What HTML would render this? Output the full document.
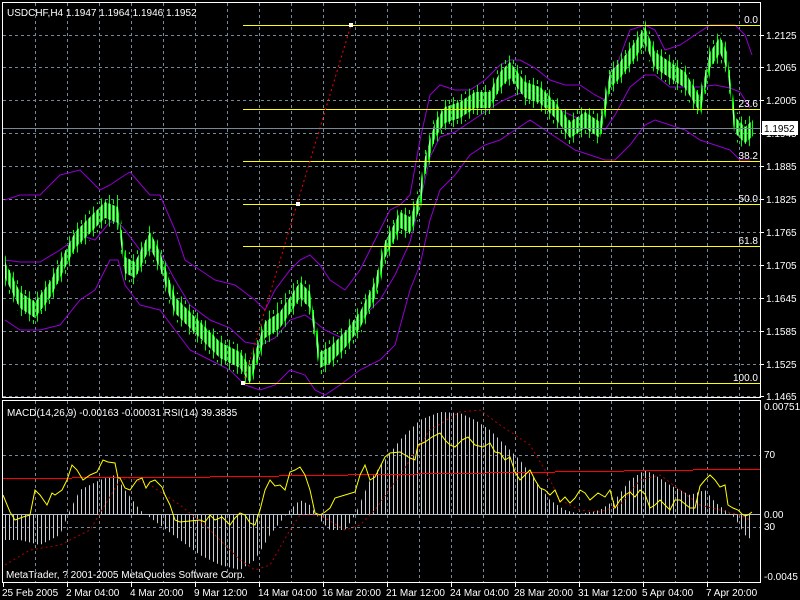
<!DOCTYPE html>
<html><head><meta charset="utf-8"><style>
html,body{margin:0;padding:0;background:#000;width:800px;height:600px;overflow:hidden}
svg{display:block}
text{font-family:"Liberation Sans",sans-serif;font-size:10px;fill:#fff}
</style></head><body>
<svg width="800" height="600" xmlns="http://www.w3.org/2000/svg">
<defs>
<pattern id="cd" x="4" y="0" width="4" height="10" patternUnits="userSpaceOnUse">
<rect x="0" y="0" width="3" height="10" fill="#00ff00"/><rect x="1" y="0" width="1" height="10" fill="#b0ffb0"/>
</pattern>
<pattern id="wk" x="4" y="0" width="8" height="10" patternUnits="userSpaceOnUse">
<rect x="1" y="0" width="1" height="10" fill="#00ff00"/><rect x="5" y="0" width="1" height="4" fill="#00ff00"/>
</pattern>
<pattern id="hs" x="5" y="0" width="4" height="10" patternUnits="userSpaceOnUse">
<rect x="0" y="0" width="1" height="10" fill="#c8ccd4"/>
</pattern>
</defs>
<rect width="800" height="600" fill="#000"/>
<!-- grid -->
<path stroke="#778899" stroke-dasharray="3,3" fill="none" d="M35.5 3V397M67.5 3V397M99.5 3V397M131.5 3V397M163.5 3V397M195.5 3V397M227.5 3V397M259.5 3V397M291.5 3V397M323.5 3V397M355.5 3V397M387.5 3V397M419.5 3V397M451.5 3V397M483.5 3V397M515.5 3V397M547.5 3V397M579.5 3V397M611.5 3V397M643.5 3V397M675.5 3V397M707.5 3V397M739.5 3V397
M35.5 401V582M67.5 401V582M99.5 401V582M131.5 401V582M163.5 401V582M195.5 401V582M227.5 401V582M259.5 401V582M291.5 401V582M323.5 401V582M355.5 401V582M387.5 401V582M419.5 401V582M451.5 401V582M483.5 401V582M515.5 401V582M547.5 401V582M579.5 401V582M611.5 401V582M643.5 401V582M675.5 401V582M707.5 401V582M739.5 401V582
M3 35.5H760M3 67.5H760M3 100.5H760M3 133.5H760M3 166.5H760M3 199.5H760M3 232.5H760M3 265.5H760M3 298.5H760M3 331.5H760M3 364.5H760M3 396.5H760M3 455.5H760M3 527.5H760"/>

<!-- indicator -->
<polygon fill="url(#hs)" points="3,514 5,540 20,540 40,545 60,535 70,510 80,490 100,480 115,475 125,490 140,510 160,525 180,540 200,555 220,565 240,570 255,560 270,535 290,510 300,500 310,505 320,520 330,530 345,530 355,515 370,480 385,460 400,440 420,420 440,412 460,413 475,420 490,430 510,450 520,460 535,480 550,500 565,510 580,514 600,510 615,500 630,480 645,470 655,475 670,485 690,495 705,490 715,502 725,510 735,518 745,535 752,540 752,514"/>
<line x1="3" y1="514.5" x2="760" y2="514.5" stroke="#b0bcc8"/>
<polyline fill="none" stroke="#b00000" stroke-dasharray="2,3" points="5,565 30,550 60,545 90,530 120,480 130,478 150,485 180,505 210,530 240,560 255,570 270,565 290,530 300,515 320,515 345,530 360,525 375,510 400,475 430,430 460,412 480,410 500,425 530,445 545,470 560,500 580,510 600,512 620,505 640,480 660,475 680,490 700,505 720,510 740,515 750,520"/>
<path stroke="#ff0000" fill="none" d="M3 478.5H72M72 477.5H141M141 477.5H210M210 476.5H279M279 475.5H348M348 474.5H417M417 473.5H486M486 472.5H555M555 471.5H624M624 470.5H693M693 469.5H760"/>
<polyline fill="none" stroke="#ffff00" points="3,495 10,512 15,520 23,517 30,515 35,490 40,495 47,505 52,493 55,495 62,490 67,480 72,465 77,470 83,480 90,475 97,472 103,460 108,462 115,463 118,478 120,478 125,488 130,490 137,480 142,478 146,488 150,482 155,480 162,487 165,495 170,505 175,520 180,522 190,521 200,520 205,522 210,515 215,520 222,517 230,525 235,518 240,513 245,515 250,523 255,525 260,510 265,490 270,480 275,486 280,485 285,490 290,472 295,470 300,467 305,475 310,490 315,513 320,515 325,512 330,508 335,498 345,495 355,492 360,475 365,465 370,480 375,477 380,467 385,457 390,453 400,452 410,458 415,460 418,445 425,442 432,437 440,433 445,440 450,445 455,447 462,440 468,437 475,445 483,447 490,443 495,452 500,453 505,460 510,457 515,472 520,480 525,475 530,470 535,480 540,488 545,490 550,495 555,490 560,502 565,497 570,503 575,498 580,490 585,493 590,500 598,493 605,497 610,490 615,508 620,500 625,495 630,492 635,497 640,490 645,494 650,508 655,505 660,500 665,505 670,510 675,500 680,500 690,508 695,508 700,486 705,480 710,475 715,480 720,487 725,485 728,505 733,508 738,510 742,514 745,516 748,515 752,512"/>

<!-- bollinger -->
<g fill="none" stroke="#9400d3">
<polyline points="5,200 20,195 40,195 60,175 80,170 100,190 110,185 125,175 130,172 150,195 160,195 175,230 185,260 200,270 215,280 235,285 255,300 265,310 275,290 290,270 300,260 310,255 320,265 330,280 345,290 360,270 375,240 390,210 400,205 410,195 420,140 430,95 440,85 455,90 470,90 485,80 500,65 510,60 520,60 535,68 550,80 565,85 580,85 595,95 605,100 615,70 630,30 645,25 655,30 665,50 680,45 695,35 710,25 725,25 735,25 745,35 752,55"/>
<polyline points="5,260 20,262 40,262 60,250 80,235 95,240 110,222 118,222 125,230 140,250 160,252 175,280 190,305 210,320 230,328 245,342 260,345 275,338 290,320 305,315 315,322 325,330 340,337 360,320 380,300 395,275 410,242 420,202 430,157 440,137 455,132 470,122 485,112 500,102 515,95 530,90 545,99 560,110 575,117 590,120 605,130 615,115 630,87 645,75 655,75 670,87 685,87 700,87 715,85 730,88 740,92 750,108"/>
<polyline points="5,320 20,330 40,330 60,325 80,300 95,290 110,260 118,260 125,285 140,305 160,310 175,330 190,350 210,360 230,370 245,385 260,390 275,385 290,370 305,375 315,390 325,395 340,385 360,370 380,360 395,345 410,290 420,265 430,220 440,190 455,175 470,155 485,145 500,140 515,130 530,120 545,130 560,140 575,150 590,155 605,160 615,160 630,145 645,125 655,120 670,125 685,130 700,140 715,145 730,150 740,160 750,160"/>
</g>

<!-- wicks -->
<polygon fill="url(#wk)" points="5,255 20,285 35,295 50,275 75,225 105,195 118,195 125,250 135,255 150,225 160,245 175,290 200,315 220,335 240,345 250,360 265,315 280,300 300,275 310,285 315,315 320,345 330,340 345,325 360,305 375,275 385,235 400,205 410,210 420,185 425,150 435,115 445,100 460,95 475,85 490,85 500,65 510,55 525,75 540,80 555,95 570,115 585,105 600,115 610,65 620,55 635,35 645,20 655,45 670,55 685,65 700,90 710,45 720,30 727,45 735,110 745,120 753,113 753,143 745,150 735,140 727,75 720,60 710,75 700,120 685,95 670,85 655,75 645,50 635,65 620,85 610,95 600,145 585,135 570,145 555,125 540,110 525,105 510,85 500,95 490,115 475,115 460,125 445,130 435,145 425,180 420,215 410,240 400,235 385,265 375,305 360,335 345,355 330,370 320,375 315,345 310,315 300,305 280,335 265,345 250,390 240,375 220,365 200,345 175,320 160,275 150,255 135,285 125,280 118,230 105,225 75,255 50,305 35,325 20,315 5,285"/>
<!-- candles -->
<polygon fill="url(#cd)" points="5,262 20,292 35,302 50,282 75,232 105,202 118,207 125,257 135,262 150,232 160,252 175,297 200,322 220,342 240,352 250,367 265,322 280,312 300,282 310,292 315,322 320,352 330,347 345,332 360,312 375,282 385,242 400,212 410,217 420,192 425,157 435,122 445,107 460,102 475,92 490,92 500,72 510,62 525,82 540,87 555,102 570,122 585,112 600,122 610,72 620,62 635,42 645,27 655,52 670,62 685,72 700,97 710,52 720,37 727,52 735,117 745,127 753,120 753,136 745,143 735,133 727,68 720,53 710,68 700,113 685,88 670,78 655,68 645,43 635,58 620,78 610,88 600,138 585,128 570,138 555,118 540,103 525,98 510,78 500,88 490,108 475,108 460,118 445,123 435,138 425,173 420,208 410,233 400,228 385,258 375,298 360,328 345,348 330,363 320,368 315,338 310,308 300,298 280,328 265,338 250,383 240,368 220,358 200,338 175,313 160,268 150,248 135,278 125,273 118,223 105,218 75,248 50,298 35,318 20,308 5,278"/>

<!-- fibo -->
<g stroke="#ffff00">
<line x1="243" y1="25.5" x2="760" y2="25.5"/><line x1="243" y1="109.5" x2="760" y2="109.5"/><line x1="243" y1="161.5" x2="760" y2="161.5"/>
<line x1="243" y1="204.5" x2="760" y2="204.5"/><line x1="243" y1="246.5" x2="760" y2="246.5"/><line x1="243" y1="383.5" x2="760" y2="383.5"/>
</g>
<g text-anchor="end">
<text x="758" y="23">0.0</text><text x="758" y="107">23.6</text><text x="758" y="159">38.2</text>
<text x="758" y="202">50.0</text><text x="758" y="244">61.8</text><text x="758" y="381">100.0</text>
</g>
<line x1="243" y1="383" x2="351" y2="25" stroke="#ff0000" stroke-dasharray="2,3"/>
<rect x="241" y="381" width="4" height="4" fill="#fff"/><rect x="349" y="23" width="4" height="4" fill="#fff"/><rect x="296" y="202" width="4" height="4" fill="#fff"/>
<line x1="3" y1="128.5" x2="760" y2="128.5" stroke="#778899"/>

<!-- frames -->
<path d="M2.5 2.5H760.5V397.5H2.5ZM2.5 400.5H760.5V582.5H2.5Z" stroke="#fff" fill="none"/>

<!-- right axis -->
<path stroke="#fff" d="M760 35.5H764M760 67.5H764M760 100.5H764M760 133.5H764M760 166.5H764M760 199.5H764M760 232.5H764M760 265.5H764M760 298.5H764M760 331.5H764M760 364.5H764M760 396.5H764"/>
<text x="766" y="39">1.2125</text><text x="766" y="71">1.2065</text><text x="766" y="104">1.2005</text><text x="766" y="137">1.1945</text>
<text x="766" y="170">1.1885</text><text x="766" y="203">1.1825</text><text x="766" y="236">1.1765</text><text x="766" y="269">1.1705</text>
<text x="766" y="302">1.1645</text><text x="766" y="335">1.1585</text><text x="766" y="368">1.1525</text><text x="766" y="400">1.1465</text>
<rect x="762" y="121" width="36" height="14" fill="#fff"/><text x="764" y="132" style="fill:#000">1.1952</text>
<text x="764" y="410">0.00751</text><text x="764" y="458">70</text><text x="764" y="518">0.00</text><text x="764" y="530">30</text><text x="764" y="580">-0.0045</text>

<!-- time axis -->
<path stroke="#fff" d="M3.5 583V587M67.5 583V587M131.5 583V587M195.5 583V587M259.5 583V587M323.5 583V587M387.5 583V587M451.5 583V587M515.5 583V587M579.5 583V587M643.5 583V587M707.5 583V587"/>
<text x="2" y="596">25 Feb 2005</text><text x="66" y="596">2 Mar 04:00</text><text x="130" y="596">4 Mar 20:00</text>
<text x="194" y="596">9 Mar 12:00</text><text x="258" y="596">14 Mar 04:00</text><text x="322" y="596">16 Mar 20:00</text>
<text x="386" y="596">21 Mar 12:00</text><text x="450" y="596">24 Mar 04:00</text><text x="514" y="596">28 Mar 20:00</text>
<text x="578" y="596">31 Mar 12:00</text><text x="642" y="596">5 Apr 04:00</text><text x="706" y="596">7 Apr 20:00</text>

<text x="7" y="16">USDCHF,H4  1.1947 1.1964 1.1946 1.1952</text>
<text x="7" y="416">MACD(14,26,9) -0.00163 -0.00031  RSI(14) 39.3835</text>
<text x="6" y="578">MetaTrader, ? 2001-2005 MetaQuotes Software Corp.</text>
</svg>
</body></html>
